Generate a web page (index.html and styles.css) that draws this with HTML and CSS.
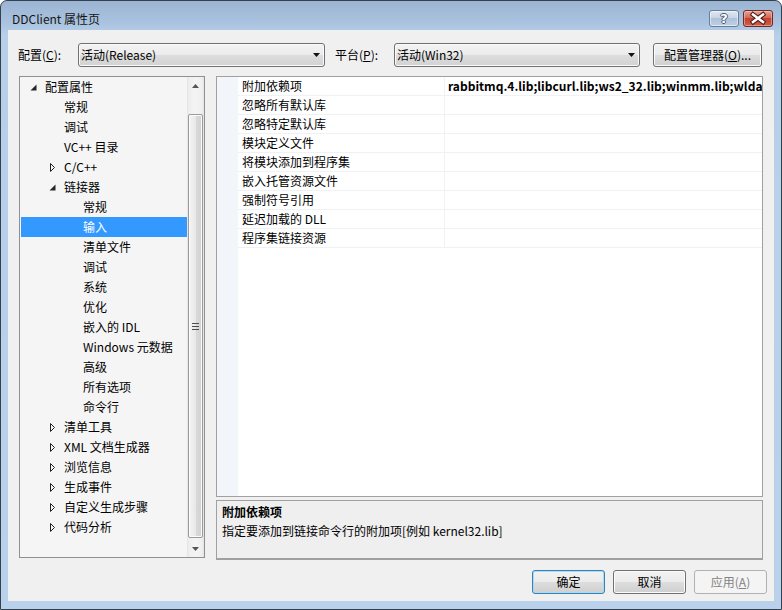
FILE: index.html
```html
<!DOCTYPE html>
<html lang="zh-CN">
<head>
<meta charset="utf-8">
<title>DDClient 属性页</title>
<link rel="stylesheet" href="styles.css">
</head>
<body>
<div class="window">
  <div class="titlebar">
    <span class="title">DDClient 属性页</span>
    <div class="caption">
      <div class="cap help"><span>?</span></div>
      <div class="cap close">
        <svg width="28" height="15" viewBox="0 0 28 15">
          <path d="M9 3.5 L19 11 M19 3.5 L9 11" stroke="#4b1a15" stroke-width="4.6" stroke-linecap="square" fill="none"/>
          <path d="M9 3.5 L19 11 M19 3.5 L9 11" stroke="#fff" stroke-width="2.6" stroke-linecap="square" fill="none"/>
        </svg>
      </div>
    </div>
  </div>
  <div class="client">
    <div class="toolbar">
      <span class="lbl lbl1">配置(<u>C</u>):</span>
      <div class="combo combo1"><span class="combo-text">活动(Release)</span><svg class="dd" width="7" height="4" viewBox="0 0 7 4"><path d="M0 0 H7 L3.5 4 Z" fill="#111"/></svg></div>
      <span class="lbl lbl2">平台(<u>P</u>):</span>
      <div class="combo combo2"><span class="combo-text">活动(Win32)</span><svg class="dd" width="7" height="4" viewBox="0 0 7 4"><path d="M0 0 H7 L3.5 4 Z" fill="#111"/></svg></div>
      <div class="btn mgr">配置管理器(<u>O</u>)...</div>
    </div>
    <div class="main">
      <div class="tree">
        <div class="list">
          <div class="row l0"><span class="tg"><svg width="7" height="7" viewBox="0 0 7 7"><path d="M6.5 0.5 V6.5 H0.5 Z" fill="#262626"/></svg></span>配置属性</div>
          <div class="row l1"><span class="tg"></span>常规</div>
          <div class="row l1"><span class="tg"></span>调试</div>
          <div class="row l1"><span class="tg"></span>VC++ 目录</div>
          <div class="row l1"><span class="tg col"><svg width="6" height="9" viewBox="0 0 6 9"><path d="M0.5 0.5 L4.5 4.5 L0.5 8.5 Z" fill="none" stroke="#222" stroke-width="1"/></svg></span>C/C++</div>
          <div class="row l1"><span class="tg"><svg width="7" height="7" viewBox="0 0 7 7"><path d="M6.5 0.5 V6.5 H0.5 Z" fill="#262626"/></svg></span>链接器</div>
          <div class="row l2"><span class="tg"></span>常规</div>
          <div class="row l2 sel"><span class="tg"></span>输入</div>
          <div class="row l2"><span class="tg"></span>清单文件</div>
          <div class="row l2"><span class="tg"></span>调试</div>
          <div class="row l2"><span class="tg"></span>系统</div>
          <div class="row l2"><span class="tg"></span>优化</div>
          <div class="row l2"><span class="tg"></span>嵌入的 IDL</div>
          <div class="row l2"><span class="tg"></span>Windows 元数据</div>
          <div class="row l2"><span class="tg"></span>高级</div>
          <div class="row l2"><span class="tg"></span>所有选项</div>
          <div class="row l2"><span class="tg"></span>命令行</div>
          <div class="row l1"><span class="tg col"><svg width="6" height="9" viewBox="0 0 6 9"><path d="M0.5 0.5 L4.5 4.5 L0.5 8.5 Z" fill="none" stroke="#222" stroke-width="1"/></svg></span>清单工具</div>
          <div class="row l1"><span class="tg col"><svg width="6" height="9" viewBox="0 0 6 9"><path d="M0.5 0.5 L4.5 4.5 L0.5 8.5 Z" fill="none" stroke="#222" stroke-width="1"/></svg></span>XML 文档生成器</div>
          <div class="row l1"><span class="tg col"><svg width="6" height="9" viewBox="0 0 6 9"><path d="M0.5 0.5 L4.5 4.5 L0.5 8.5 Z" fill="none" stroke="#222" stroke-width="1"/></svg></span>浏览信息</div>
          <div class="row l1"><span class="tg col"><svg width="6" height="9" viewBox="0 0 6 9"><path d="M0.5 0.5 L4.5 4.5 L0.5 8.5 Z" fill="none" stroke="#222" stroke-width="1"/></svg></span>生成事件</div>
          <div class="row l1"><span class="tg col"><svg width="6" height="9" viewBox="0 0 6 9"><path d="M0.5 0.5 L4.5 4.5 L0.5 8.5 Z" fill="none" stroke="#222" stroke-width="1"/></svg></span>自定义生成步骤</div>
          <div class="row l1"><span class="tg col"><svg width="6" height="9" viewBox="0 0 6 9"><path d="M0.5 0.5 L4.5 4.5 L0.5 8.5 Z" fill="none" stroke="#222" stroke-width="1"/></svg></span>代码分析</div>
        </div>
        <div class="vscroll">
          <div class="arrow up"><svg width="7" height="4" viewBox="0 0 7 4"><path d="M0 4 H7 L3.5 0 Z" fill="#555"/></svg></div>
          <div class="track">
            <div class="thumb"><span class="grip"></span></div>
          </div>
          <div class="arrow down"><svg width="7" height="4" viewBox="0 0 7 4"><path d="M0 0 H7 L3.5 4 Z" fill="#555"/></svg></div>
        </div>
      </div>
      <div class="right">
        <div class="grid">
          <div class="prow"><span class="pname">附加依赖项</span><span class="pval bold">rabbitmq.4.lib;libcurl.lib;ws2_32.lib;winmm.lib;wldap32.lib;%(AdditionalDependencies)</span></div>
          <div class="prow"><span class="pname">忽略所有默认库</span><span class="pval"></span></div>
          <div class="prow"><span class="pname">忽略特定默认库</span><span class="pval"></span></div>
          <div class="prow"><span class="pname">模块定义文件</span><span class="pval"></span></div>
          <div class="prow"><span class="pname">将模块添加到程序集</span><span class="pval"></span></div>
          <div class="prow"><span class="pname">嵌入托管资源文件</span><span class="pval"></span></div>
          <div class="prow"><span class="pname">强制符号引用</span><span class="pval"></span></div>
          <div class="prow"><span class="pname">延迟加载的 DLL</span><span class="pval"></span></div>
          <div class="prow"><span class="pname">程序集链接资源</span><span class="pval"></span></div>
        </div>
        <div class="desc">
          <div class="desc-title">附加依赖项</div>
          <div class="desc-text">指定要添加到链接命令行的附加项[例如 kernel32.lib]</div>
        </div>
      </div>
    </div>
    <div class="buttons">
      <div class="btn default">确定</div>
      <div class="btn">取消</div>
      <div class="btn disabled">应用(<u>A</u>)</div>
    </div>
  </div>
</div>
</body>
</html>
```
FILE: styles.css
```css
html, body {
  margin: 0;
  padding: 0;
}
body {
  width: 782px;
  height: 610px;
  overflow: hidden;
  background: #ffffff;
  font-family: "Noto Sans CJK SC", "Noto Sans", sans-serif;
  font-size: 12px;
  color: #000;
}
u {
  text-decoration: underline;
  text-underline-offset: 1px;
}
.window {
  box-sizing: border-box;
  width: 782px;
  height: 610px;
  border: 1px solid #34414f;
  border-radius: 7px 7px 0 0;
  background: linear-gradient(to bottom, #9ab4d2 0, #aac3df 22px, #b7cfe9 34px, #b9d1ea 100%);
  display: flex;
  flex-direction: column;
  overflow: hidden;
}
.titlebar {
  height: 29px;
  flex: none;
  display: flex;
  align-items: flex-start;
}
.title {
  margin: 9px 0 0 11px;
  line-height: 18px;
  font-size: 12px;
  color: #151515;
}
.caption {
  margin: 9px 8px 0 auto;
  display: flex;
  gap: 4px;
}
.cap {
  box-sizing: border-box;
  width: 30px;
  height: 17px;
  border-radius: 3px;
  display: flex;
  align-items: center;
  justify-content: center;
}
.help {
  border: 1px solid #6a7e98;
  background: linear-gradient(to bottom, #dfe8f3 0, #c7d6e8 45%, #aec2d9 50%, #bdd0e6 100%);
  box-shadow: inset 0 0 0 1px rgba(255,255,255,0.5);
}
.help span {
  font-family: "DejaVu Sans", sans-serif;
  font-weight: bold;
  font-size: 13px;
  line-height: 15px;
  color: #fff;
  text-shadow: 1px 0 0 #4a5a70, -1px 0 0 #4a5a70, 0 1px 0 #4a5a70, 0 -1px 0 #4a5a70;
}
.close {
  border: 1px solid #6f2a22;
  background: linear-gradient(to bottom, #e8a196 0, #d2685a 45%, #c3412f 50%, #cf5f48 100%);
  box-shadow: inset 0 0 0 1px rgba(255,220,210,0.45);
}
.close svg {
  display: block;
}
.client {
  margin: 0 7px 8px 7px;
  height: 571px;
  flex: none;
  background: #f0f0f0;
  display: flex;
  flex-direction: column;
}
.toolbar {
  margin-top: 13px;
  height: 24px;
  padding-left: 10px;
  display: flex;
  align-items: center;
}
.lbl {
  line-height: 24px;
  color: #000;
}
.lbl1 {
  width: 60px;
}
.lbl2 {
  margin-left: 10px;
  width: 59px;
}
.combo {
  box-sizing: border-box;
  height: 24px;
  border: 1px solid #707070;
  border-radius: 3px;
  background: linear-gradient(to bottom, #f3f3f3 0, #ebebeb 50%, #dddddd 50%, #d2d2d2 100%);
  box-shadow: inset 0 0 0 1px #fafafa;
  display: flex;
  align-items: center;
  padding: 0 4px 0 2px;
}
.combo1 {
  width: 247px;
}
.combo2 {
  width: 246px;
}
.combo-text {
  flex: 1;
  line-height: 20px;
}
.dd {
  display: block;
}
.btn {
  box-sizing: border-box;
  height: 24px;
  width: 73px;
  border: 1px solid #707070;
  border-radius: 3px;
  background: linear-gradient(to bottom, #f2f2f2 0, #ebebeb 50%, #dddddd 50%, #cfcfcf 100%);
  box-shadow: inset 0 0 0 1px #fbfbfb;
  display: flex;
  align-items: center;
  justify-content: center;
  line-height: 20px;
}
.mgr {
  width: 109px;
  margin-left: 13px;
}
.main {
  margin-top: 9px;
  padding-left: 11px;
  display: flex;
  gap: 11px;
  height: 484px;
}
.tree {
  box-sizing: border-box;
  width: 186px;
  height: 482px;
  border: 1px solid #8e9091;
  background: #f5f5f5;
  display: flex;
}
.list {
  flex: 1;
  overflow: hidden;
}
.row {
  height: 20px;
  line-height: 20px;
  display: flex;
  align-items: center;
  white-space: nowrap;
  color: #000;
}
.row.l0 { padding-left: 6px; }
.row.l1 { padding-left: 25px; }
.row.l2 { padding-left: 44px; }
.row.sel {
  margin-left: 1px;
  padding-left: 43px;
  background: #3399ff;
  color: #fff;
}
.tg {
  width: 19px;
  flex: none;
  height: 20px;
  display: flex;
  align-items: center;
  padding-left: 4px;
  box-sizing: border-box;
}
.tg.col {
  padding-left: 5px;
}
.tg svg {
  display: block;
}
.vscroll {
  width: 17px;
  flex: none;
  display: flex;
  flex-direction: column;
  background: linear-gradient(to right, #e3e3e3 0, #efefef 2px, #f4f4f4 50%, #efefef 15px, #e3e3e3 17px);
}
.arrow {
  height: 17px;
  flex: none;
  display: flex;
  align-items: center;
  justify-content: center;
}
.track {
  flex: 1;
  padding-top: 20px;
  padding-bottom: 1px;
  box-sizing: border-box;
  display: flex;
  flex-direction: column;
}
.thumb {
  box-sizing: border-box;
  margin-left: 1px;
  width: 15px;
  height: 424px;
  border: 1px solid #9a9a9a;
  border-radius: 2px;
  background: linear-gradient(to right, #f4f4f4 0, #e8e8e8 50%, #d9d9d9 51%, #d2d2d2 100%);
  box-shadow: inset 0 0 0 1px #fbfbfb;
  display: flex;
  align-items: center;
  justify-content: center;
}
.grip {
  display: block;
  width: 7px;
  height: 7px;
  background: repeating-linear-gradient(to bottom, #4d4d4d 0, #4d4d4d 1px, transparent 1px, transparent 3px);
}
.right {
  width: 547px;
  display: flex;
  flex-direction: column;
  gap: 3px;
}
.grid {
  box-sizing: border-box;
  height: 421px;
  border: 1px solid #a0a0a0;
  background: linear-gradient(to right, #f2f5fa 0, #f2f5fa 21px, #ffffff 21px);
  overflow: hidden;
}
.prow {
  margin-left: 21px;
  height: 19px;
  box-sizing: border-box;
  border-bottom: 1px solid #eff1f5;
  display: flex;
  background: #fff;
}
.pname {
  width: 206px;
  flex: none;
  box-sizing: border-box;
  padding-left: 4px;
  line-height: 18px;
  white-space: nowrap;
}
.pval {
  flex: 1;
  box-sizing: border-box;
  border-left: 1px solid #eff1f5;
  padding-left: 3px;
  line-height: 18px;
  white-space: nowrap;
  overflow: hidden;
}
.bold {
  font-weight: bold;
}
.desc {
  box-sizing: border-box;
  height: 60px;
  border: 1px solid #a0a0a0;
  border-bottom-width: 2px;
  background: #efefef;
  padding: 1px 5px 0 5px;
}
.desc-title {
  font-weight: bold;
  line-height: 19px;
}
.desc-text {
  line-height: 19px;
}
.buttons {
  margin-top: 10px;
  padding-right: 7px;
  display: flex;
  justify-content: flex-end;
  gap: 8px;
}
.btn.default {
  border-color: #3c7fb1;
  box-shadow: inset 0 0 0 1px #a6dcf5;
}
.btn.disabled {
  border-color: #adb2b5;
  background: #f4f4f4;
  box-shadow: none;
  color: #838383;
}
```
